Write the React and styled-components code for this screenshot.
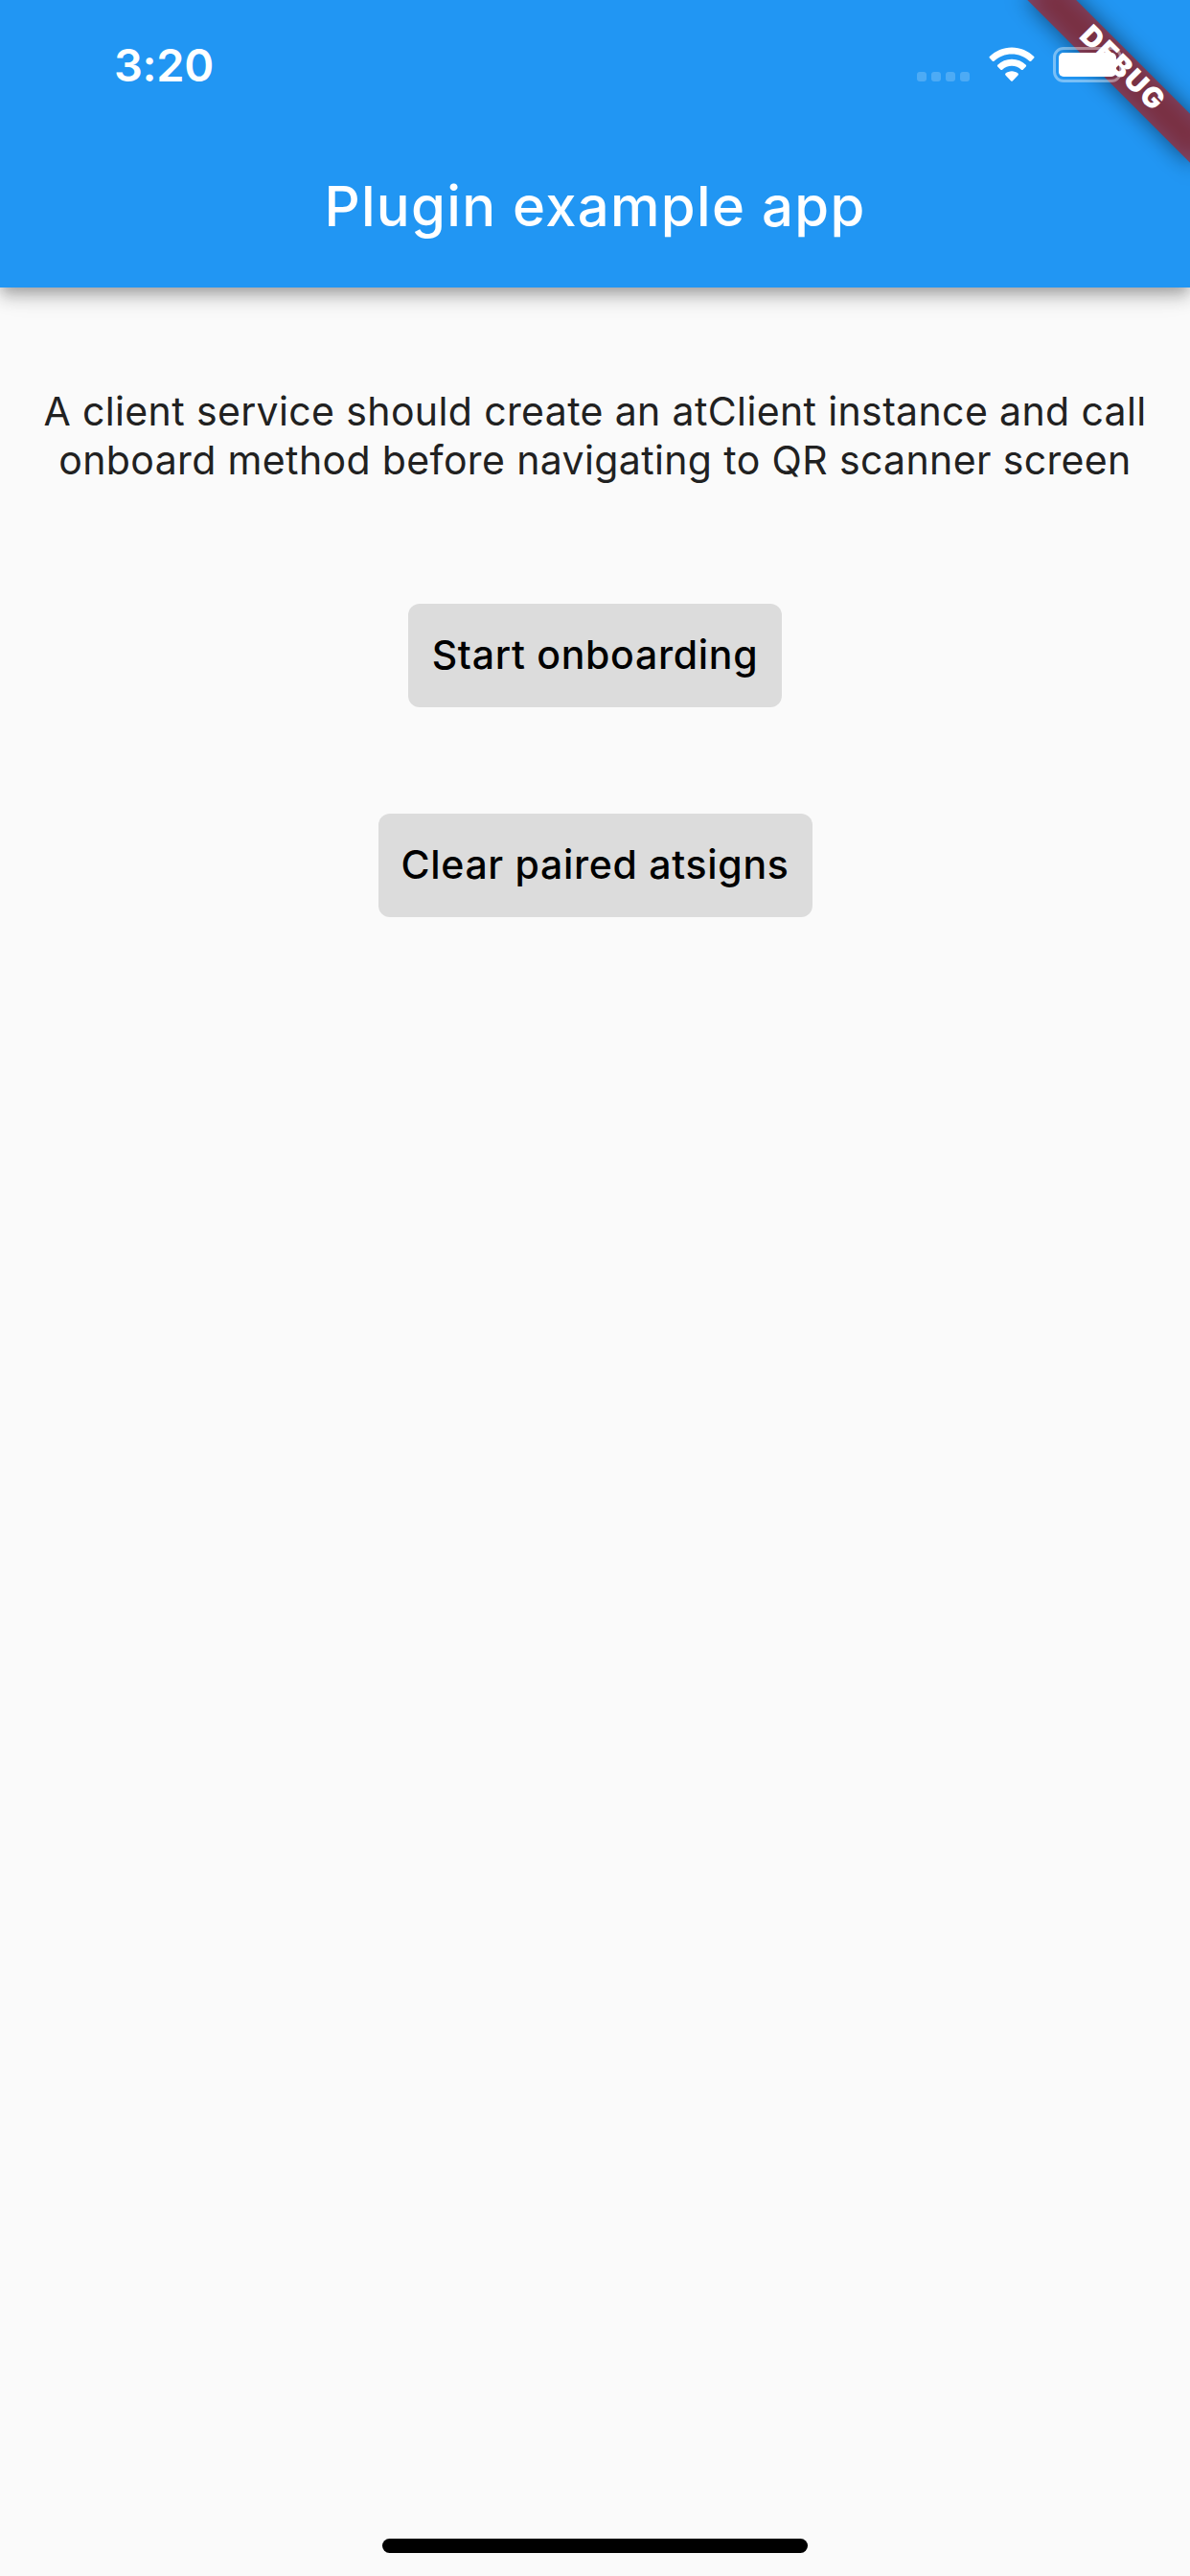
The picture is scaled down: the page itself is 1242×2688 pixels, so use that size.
import React from "react";
import styled, { createGlobalStyle } from "styled-components";

const GlobalStyle = createGlobalStyle`
  *, *::before, *::after { box-sizing: border-box; }
  body {
    margin: 0;
    background: #fafafa;
    font-family: Inter, Roboto, "Liberation Sans", sans-serif;
  }
`;

const Screen = styled.div`
  position: relative;
  display: flex;
  flex-direction: column;
  width: 1242px;
  height: 2688px;
  overflow: hidden;
  background: #fafafa;
`;

const Header = styled.header`
  flex: none;
  display: flex;
  flex-direction: column;
  height: 300px;
  background: #2196f3;
  box-shadow:
    0 6px 12px -3px rgba(0, 0, 0, 0.2),
    0 12px 15px 0 rgba(0, 0, 0, 0.14),
    0 3px 30px 0 rgba(0, 0, 0, 0.12);
`;

/* The system status bar is drawn over the debug ribbon. */
const StatusBar = styled.div`
  position: relative;
  z-index: 2;
  display: flex;
  justify-content: space-between;
  height: 132px;
  padding: 0 64px 0 119px;
`;

const Clock = styled.time`
  padding-top: 38px;
  font-size: 47px;
  font-weight: 600;
  line-height: 60px;
  letter-spacing: -0.3px;
  color: #fff;
`;

const StatusIcons = styled.div`
  display: flex;
  align-items: flex-start;
  padding-top: 49px;
`;

const SignalDots = styled.div`
  display: flex;
  gap: 5px;
  margin: 26px 20px 0 0;
`;

const Dot = styled.span`
  width: 10px;
  height: 10px;
  border-radius: 3px;
  background: rgba(255, 255, 255, 0.2);
`;

const WifiIcon = styled.svg`
  display: block;
  width: 48px;
  height: 37px;
  margin-right: 19px;
`;

const Battery = styled.div`
  width: 72px;
  height: 37px;
  padding: 3px;
  border: 3px solid rgba(255, 255, 255, 0.4);
  border-radius: 11px;
`;

const BatteryLevel = styled.div`
  height: 25px;
  border-radius: 5px;
  background: #fff;
`;

const BatteryTip = styled.div`
  width: 4px;
  height: 12px;
  margin: 12px 0 0 3px;
  border-radius: 0 4px 4px 0;
  background: rgba(255, 255, 255, 0.4);
`;

const TitleBar = styled.div`
  display: flex;
  align-items: center;
  justify-content: center;
  height: 168px;
  padding-bottom: 2px;
`;

const Title = styled.h1`
  margin: 0;
  font-size: 58px;
  font-weight: 500;
  line-height: 72px;
  letter-spacing: 1.3px;
  color: #fff;
`;

const Content = styled.main`
  flex: 1;
  display: flex;
  flex-direction: column;
  align-items: center;
  padding-top: 104px;
`;

const Message = styled.p`
  margin: 0 0 124px;
  font-size: 41px;
  line-height: 51px;
  letter-spacing: 0.37px;
  text-align: center;
  white-space: nowrap;
  color: #212121;
`;

const FlatButton = styled.button`
  width: ${(p) => p.$width}px;
  height: 108px;
  margin: 0 0 111px;
  padding: 0 0 2px;
  border: 0;
  border-radius: 12px;
  background: #dcdcdc;
  color: #000;
  font-family: inherit;
  font-size: 41px;
  font-weight: 500;
  line-height: 51px;
  letter-spacing: 0.7px;
  white-space: nowrap;
`;

const HomeIndicator = styled.div`
  flex: none;
  align-self: center;
  width: 444px;
  height: 15px;
  margin-bottom: 24px;
  border-radius: 8px;
  background: #000;
`;

/* Rotated around the top right corner of the screen. */
const Ribbon = styled.div`
  position: absolute;
  z-index: 1;
  top: 84px;
  left: 1122px;
  width: 240px;
  height: 36px;
  transform: rotate(45deg);
  transform-origin: 120px -84px;
`;

const RibbonShadow = styled.div`
  position: absolute;
  inset: 0;
  background: rgba(0, 0, 0, 0.5);
  filter: blur(11.9px);
`;

const RibbonLabel = styled.div`
  position: absolute;
  inset: 0;
  padding-left: 2px;
  background: rgba(183, 28, 28, 0.627);
  text-align: center;
  font-size: 29.6px;
  font-weight: 900;
  line-height: 31.6px;
  letter-spacing: 1.8px;
  color: #fff;
`;

export default function App() {
  return (
    <>
      <GlobalStyle />
      <Screen>
        <Header>
          <StatusBar>
            <Clock>3:20</Clock>
            <StatusIcons>
              <SignalDots>
                <Dot />
                <Dot />
                <Dot />
                <Dot />
              </SignalDots>
              <WifiIcon viewBox="0 0 48 37" fill="#fff">
                <path d="M24 0.4C33 0.4 41.2 4 47.2 9.9Q48 10.7 47.2 11.6L44.2 14.7Q43.4 15.5 42.5 14.7C37.6 10.1 31.1 7.4 24 7.4S10.4 10.1 5.5 14.7Q4.6 15.5 3.8 14.7L0.8 11.6Q0 10.7 0.8 9.9C6.8 4 15 0.4 24 0.4Z" />
                <path d="M24 12.8C29.7 12.8 34.9 15 38.8 18.7Q39.6 19.6 38.8 20.4L35.6 23.7Q34.8 24.4 33.9 23.7C31.3 21.2 27.8 19.7 24 19.7S16.7 21.2 14.1 23.7Q13.2 24.4 12.4 23.7L9.2 20.4Q8.4 19.6 9.2 18.7C13.1 15 18.3 12.8 24 12.8Z" />
                <path d="M24 25.3C26.4 25.3 28.7 26.2 30.5 27.6Q31.4 28.5 30.5 29.4L24.8 35.4Q24 36.2 23.2 35.4L17.5 29.4Q16.6 28.5 17.5 27.6C19.3 26.2 21.6 25.3 24 25.3Z" />
              </WifiIcon>
              <Battery>
                <BatteryLevel />
              </Battery>
              <BatteryTip />
            </StatusIcons>
          </StatusBar>
          <TitleBar>
            <Title>Plugin example app</Title>
          </TitleBar>
        </Header>
        <Content>
          <Message>
            A client service should create an atClient instance and call
            <br />
            onboard method before navigating to QR scanner screen
          </Message>
          <FlatButton $width={390}>Start onboarding</FlatButton>
          <FlatButton $width={453}>Clear paired atsigns</FlatButton>
        </Content>
        <HomeIndicator />
        <Ribbon>
          <RibbonShadow />
          <RibbonLabel>DEBUG</RibbonLabel>
        </Ribbon>
      </Screen>
    </>
  );
}
